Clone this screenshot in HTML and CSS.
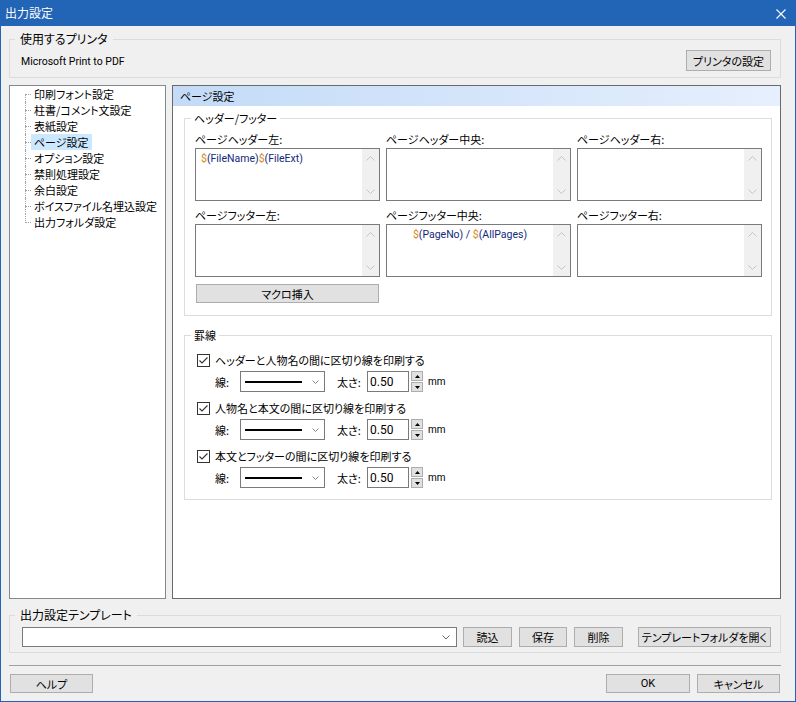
FILE: index.html
```html
<!DOCTYPE html>
<html lang="ja">
<head>
<meta charset="utf-8">
<title>出力設定</title>
<link rel="stylesheet" href="styles.css">
</head>
<body>
<div class="window">
  <div class="titlebar">
    <span class="title">出力設定</span>
    <svg class="close" width="10" height="10" viewBox="0 0 10 10"><path d="M0.5 0.5L9.5 9.5M9.5 0.5L0.5 9.5" stroke="#fff" stroke-width="1.1" fill="none"/></svg>
  </div>
  <div class="client">
    <fieldset class="group outer printer">
      <legend>使用するプリンタ</legend>
      <div class="printer-row">
        <span class="printer-name">Microsoft Print to PDF</span>
        <button class="btn btn-printer">プリンタの設定</button>
      </div>
    </fieldset>

    <div class="main">
      <ul class="tree">
        <li><span>印刷フォント設定</span></li>
        <li><span>柱書/コメント文設定</span></li>
        <li><span>表紙設定</span></li>
        <li class="selected"><span>ページ設定</span></li>
        <li><span>オプション設定</span></li>
        <li><span>禁則処理設定</span></li>
        <li><span>余白設定</span></li>
        <li><span>ボイスファイル名埋込設定</span></li>
        <li><span>出力フォルダ設定</span></li>
      </ul>

      <section class="panel">
        <div class="panel-head">ページ設定</div>

        <fieldset class="group hf">
          <legend>ヘッダー/フッター</legend>
          <div class="hf-grid">
            <div class="cell">
              <div class="lbl">ページヘッダー左:</div>
              <div class="memo">
                <div class="memo-text"><span class="d">$</span>(FileName)<span class="d">$</span>(FileExt)</div>
                <div class="vscroll">
                  <svg width="9" height="5" viewBox="0 0 9 5"><polyline points="0.5,4.5 4.5,0.5 8.5,4.5" fill="none" stroke="#c4c4c4"/></svg>
                  <svg width="9" height="5" viewBox="0 0 9 5"><polyline points="0.5,0.5 4.5,4.5 8.5,0.5" fill="none" stroke="#c4c4c4"/></svg>
                </div>
              </div>
            </div>
            <div class="cell">
              <div class="lbl">ページヘッダー中央:</div>
              <div class="memo">
                <div class="memo-text"></div>
                <div class="vscroll">
                  <svg width="9" height="5" viewBox="0 0 9 5"><polyline points="0.5,4.5 4.5,0.5 8.5,4.5" fill="none" stroke="#c4c4c4"/></svg>
                  <svg width="9" height="5" viewBox="0 0 9 5"><polyline points="0.5,0.5 4.5,4.5 8.5,0.5" fill="none" stroke="#c4c4c4"/></svg>
                </div>
              </div>
            </div>
            <div class="cell">
              <div class="lbl">ページヘッダー右:</div>
              <div class="memo">
                <div class="memo-text"></div>
                <div class="vscroll">
                  <svg width="9" height="5" viewBox="0 0 9 5"><polyline points="0.5,4.5 4.5,0.5 8.5,4.5" fill="none" stroke="#c4c4c4"/></svg>
                  <svg width="9" height="5" viewBox="0 0 9 5"><polyline points="0.5,0.5 4.5,4.5 8.5,0.5" fill="none" stroke="#c4c4c4"/></svg>
                </div>
              </div>
            </div>
            <div class="cell">
              <div class="lbl">ページフッター左:</div>
              <div class="memo">
                <div class="memo-text"></div>
                <div class="vscroll">
                  <svg width="9" height="5" viewBox="0 0 9 5"><polyline points="0.5,4.5 4.5,0.5 8.5,4.5" fill="none" stroke="#c4c4c4"/></svg>
                  <svg width="9" height="5" viewBox="0 0 9 5"><polyline points="0.5,0.5 4.5,4.5 8.5,0.5" fill="none" stroke="#c4c4c4"/></svg>
                </div>
              </div>
            </div>
            <div class="cell">
              <div class="lbl">ページフッター中央:</div>
              <div class="memo">
                <div class="memo-text center"><span class="d">$</span>(PageNo) / <span class="d">$</span>(AllPages)</div>
                <div class="vscroll">
                  <svg width="9" height="5" viewBox="0 0 9 5"><polyline points="0.5,4.5 4.5,0.5 8.5,4.5" fill="none" stroke="#c4c4c4"/></svg>
                  <svg width="9" height="5" viewBox="0 0 9 5"><polyline points="0.5,0.5 4.5,4.5 8.5,0.5" fill="none" stroke="#c4c4c4"/></svg>
                </div>
              </div>
            </div>
            <div class="cell">
              <div class="lbl">ページフッター右:</div>
              <div class="memo">
                <div class="memo-text"></div>
                <div class="vscroll">
                  <svg width="9" height="5" viewBox="0 0 9 5"><polyline points="0.5,4.5 4.5,0.5 8.5,4.5" fill="none" stroke="#c4c4c4"/></svg>
                  <svg width="9" height="5" viewBox="0 0 9 5"><polyline points="0.5,0.5 4.5,4.5 8.5,0.5" fill="none" stroke="#c4c4c4"/></svg>
                </div>
              </div>
            </div>
          </div>
          <button class="btn btn-macro">マクロ挿入</button>
        </fieldset>

        <fieldset class="group rules">
          <legend>罫線</legend>

          <div class="rule-item">
            <div class="check-row">
              <svg class="checkbox" width="13" height="13" viewBox="0 0 13 13"><rect x="0.5" y="0.5" width="12" height="12" fill="#fff" stroke="#333"/><polyline points="2.5,6.5 5,9 10.5,3.5" fill="none" stroke="#333" stroke-width="1.1"/></svg>
              <span>ヘッダーと人物名の間に区切り線を印刷する</span>
            </div>
            <div class="ctrl-row">
              <span class="ctrl-lbl">線:</span>
              <div class="combo-line"><span class="line-sample"></span><svg width="7" height="4" viewBox="0 0 7 4"><polyline points="0.5,0.5 3.5,3.5 6.5,0.5" fill="none" stroke="#8a8a8a"/></svg></div>
              <span class="ctrl-lbl2">太さ:</span>
              <div class="spin-input">0.50</div>
              <div class="spin-btns">
                <div class="spin-btn"><svg width="5" height="3" viewBox="0 0 5 3"><polygon points="0,3 2.5,0 5,3" fill="#000"/></svg></div>
                <div class="spin-btn"><svg width="5" height="3" viewBox="0 0 5 3"><polygon points="0,0 2.5,3 5,0" fill="#000"/></svg></div>
              </div>
              <span class="unit">mm</span>
            </div>
          </div>

          <div class="rule-item">
            <div class="check-row">
              <svg class="checkbox" width="13" height="13" viewBox="0 0 13 13"><rect x="0.5" y="0.5" width="12" height="12" fill="#fff" stroke="#333"/><polyline points="2.5,6.5 5,9 10.5,3.5" fill="none" stroke="#333" stroke-width="1.1"/></svg>
              <span>人物名と本文の間に区切り線を印刷する</span>
            </div>
            <div class="ctrl-row">
              <span class="ctrl-lbl">線:</span>
              <div class="combo-line"><span class="line-sample"></span><svg width="7" height="4" viewBox="0 0 7 4"><polyline points="0.5,0.5 3.5,3.5 6.5,0.5" fill="none" stroke="#8a8a8a"/></svg></div>
              <span class="ctrl-lbl2">太さ:</span>
              <div class="spin-input">0.50</div>
              <div class="spin-btns">
                <div class="spin-btn"><svg width="5" height="3" viewBox="0 0 5 3"><polygon points="0,3 2.5,0 5,3" fill="#000"/></svg></div>
                <div class="spin-btn"><svg width="5" height="3" viewBox="0 0 5 3"><polygon points="0,0 2.5,3 5,0" fill="#000"/></svg></div>
              </div>
              <span class="unit">mm</span>
            </div>
          </div>

          <div class="rule-item">
            <div class="check-row">
              <svg class="checkbox" width="13" height="13" viewBox="0 0 13 13"><rect x="0.5" y="0.5" width="12" height="12" fill="#fff" stroke="#333"/><polyline points="2.5,6.5 5,9 10.5,3.5" fill="none" stroke="#333" stroke-width="1.1"/></svg>
              <span>本文とフッターの間に区切り線を印刷する</span>
            </div>
            <div class="ctrl-row">
              <span class="ctrl-lbl">線:</span>
              <div class="combo-line"><span class="line-sample"></span><svg width="7" height="4" viewBox="0 0 7 4"><polyline points="0.5,0.5 3.5,3.5 6.5,0.5" fill="none" stroke="#8a8a8a"/></svg></div>
              <span class="ctrl-lbl2">太さ:</span>
              <div class="spin-input">0.50</div>
              <div class="spin-btns">
                <div class="spin-btn"><svg width="5" height="3" viewBox="0 0 5 3"><polygon points="0,3 2.5,0 5,3" fill="#000"/></svg></div>
                <div class="spin-btn"><svg width="5" height="3" viewBox="0 0 5 3"><polygon points="0,0 2.5,3 5,0" fill="#000"/></svg></div>
              </div>
              <span class="unit">mm</span>
            </div>
          </div>
        </fieldset>
      </section>
    </div>

    <fieldset class="group outer template">
      <legend>出力設定テンプレート</legend>
      <div class="tpl-row">
        <div class="tpl-combo"><svg width="8" height="5" viewBox="0 0 8 5"><polyline points="0.5,0.5 4,4 7.5,0.5" fill="none" stroke="#666"/></svg></div>
        <button class="btn btn-load">読込</button>
        <button class="btn btn-save">保存</button>
        <button class="btn btn-del">削除</button>
        <button class="btn btn-open">テンプレートフォルダを開く</button>
      </div>
    </fieldset>

    <div class="sep"></div>

    <div class="footer">
      <button class="btn btn-help">ヘルプ</button>
      <button class="btn btn-ok latin">OK</button>
      <button class="btn btn-cancel">キャンセル</button>
    </div>
  </div>
</div>
</body>
</html>
```

FILE: styles.css
```css
* { box-sizing: border-box; }
html, body { margin: 0; padding: 0; }
body {
  width: 796px;
  height: 702px;
  overflow: hidden;
  background: #f0f0f0;
  font-family: "Noto Sans CJK JP", sans-serif;
  font-size: 11px;
  line-height: 16px;
  color: #000;
  font-feature-settings: "palt";
}
.latin { font-family: Roboto, "Noto Sans CJK JP", sans-serif; }

.window {
  width: 796px;
  height: 702px;
  border: 1px solid #2264b5;
  border-top: 0;
  display: flex;
  flex-direction: column;
}

.titlebar {
  height: 26px;
  flex: none;
  margin: 0 -1px;
  background: #2264b5;
  color: #fff;
  display: flex;
  align-items: center;
  justify-content: space-between;
  padding: 0 10px 0 5px;
}
.title { font-size: 12px; }
.close { margin-top: 2px; }

.client {
  flex: 1;
  display: flex;
  flex-direction: column;
  padding: 0 14px 0 8px;
}

/* group boxes */
.group {
  margin: 0;
  border: 1px solid #dcdcdc;
  min-width: 0;
}
.group > legend {
  padding: 0 5px;
  line-height: 16px;
  white-space: nowrap;
}
.outer > legend { font-size: 12px; }

.btn {
  font: inherit;
  font-feature-settings: "palt";
  color: #000;
  background: #e1e1e1;
  border: 1px solid #adadad;
  padding: 0;
  margin: 0;
  line-height: 16px;
  white-space: nowrap;
  display: flex;
  align-items: center;
  justify-content: center;
}
.btn.latin { font-family: Roboto, sans-serif; }

/* printer */
.printer {
  margin-top: 5px;
  padding: 3px 9px 6px 11px;
}
.printer > legend { margin-left: -6px; }
.printer-row {
  height: 21px;
  display: flex;
  align-items: center;
  justify-content: space-between;
}
.printer-name {
  font-family: Roboto, sans-serif;
  font-size: 10.5px;
  padding-top: 2px;
}
.btn-printer { width: 85px; height: 21px; }

/* main area */
.main {
  margin-top: 7px;
  height: 514px;
  flex: none;
  display: flex;
  gap: 6px;
}

.tree {
  width: 157px;
  flex: none;
  margin: 0;
  padding: 0;
  list-style: none;
  background: #fff;
  border: 1px solid #828790;
}
.tree li {
  position: relative;
  height: 16px;
  line-height: 16px;
  padding-left: 21px;
  white-space: nowrap;
}
.tree li span {
  display: inline-block;
  padding: 0 3px 0 3px;
  height: 16px;
}
.tree li.selected span { background: #cce8ff; }
.tree li::before {
  content: "";
  position: absolute;
  left: 15px;
  top: 8px;
  width: 6px;
  border-top: 1px dotted #a0a0a0;
}
.tree li::after {
  content: "";
  position: absolute;
  left: 15px;
  top: 0;
  height: 16px;
  border-left: 1px dotted #a0a0a0;
}
.tree li:first-child::after { top: 8px; height: 8px; }
.tree li:last-child::after { height: 9px; }

.panel {
  flex: 1;
  background: #fff;
  border: 1px solid #6a6a6a;
}
.panel-head {
  height: 20px;
  line-height: 20px;
  padding-left: 7px;
  background: linear-gradient(to right, #c3dbf7, #e6effd);
}

/* header / footer group */
.hf {
  margin: 4px 8px 0 11px;
  padding: 5px 9px 12px 10px;
}
.hf > legend { margin-left: -4px; padding: 0 3px; }
.hf-grid {
  display: grid;
  grid-template-columns: repeat(3, 185px);
  column-gap: 6px;
  row-gap: 6px;
}
.lbl { height: 17px; line-height: 17px; }
.memo {
  height: 53px;
  border: 1px solid #7a7a7a;
  background: #fff;
  display: flex;
}
.memo-text {
  flex: 1;
  padding: 2px 5px 0 5px;
  font-family: Roboto, sans-serif;
  font-size: 10.5px;
  color: #14287a;
  white-space: nowrap;
}
.memo-text.center { text-align: center; }
.memo-text .d { color: #d08a10; }
.vscroll {
  width: 17px;
  flex: none;
  background: #f0f0f0;
  display: flex;
  flex-direction: column;
  align-items: center;
  justify-content: space-between;
  padding: 7px 0 6px;
}
.vscroll svg { display: block; }
.btn-macro {
  margin: 7px 0 0 1px;
  width: 183px;
  height: 19px;
}

/* rules group */
.rules {
  margin: 11px 8px 0 11px;
  padding: 9px 9px 11px 12px;
}
.rules > legend { margin-left: -6px; padding: 0 3px; }
.rule-item + .rule-item { margin-top: 8px; }
.check-row {
  height: 16px;
  display: flex;
  align-items: center;
  white-space: nowrap;
}
.checkbox { display: block; margin-right: 5px; flex: none; }
.ctrl-row {
  margin-top: 3px;
  height: 21px;
  display: flex;
  align-items: center;
  padding-left: 18px;
}
.ctrl-lbl { width: 25px; }
.combo-line {
  width: 85px;
  height: 21px;
  border: 1px solid #7a7a7a;
  background: #fff;
  display: flex;
  align-items: center;
  padding: 0 5px 0 4px;
}
.line-sample {
  width: 57px;
  height: 2px;
  background: #000;
}
.combo-line svg { margin-left: auto; display: block; }
.ctrl-lbl2 { margin-left: 12px; width: 30px; }
.spin-input {
  width: 42px;
  height: 21px;
  border: 1px solid #7a7a7a;
  background: #fff;
  padding: 1px 0 0 2px;
  line-height: 18px;
  font-family: Roboto, sans-serif;
  font-size: 12px;
}
.spin-btns {
  margin-left: 2px;
  width: 12px;
  height: 21px;
  display: flex;
  flex-direction: column;
  justify-content: space-between;
}
.spin-btn {
  height: 10px;
  background: #e1e1e1;
  border: 1px solid #adadad;
  display: flex;
  align-items: center;
  justify-content: center;
}
.spin-btn svg { display: block; }
.unit { margin-left: 5px; font-family: Roboto, sans-serif; font-size: 10px; }

/* template group */
.template {
  margin-top: 8px;
  padding: 4px 9px 5px 12px;
}
.template > legend { margin-left: -7px; }
.tpl-row {
  height: 20px;
  display: flex;
}
.tpl-combo {
  width: 435px;
  height: 20px;
  border: 1px solid #7a7a7a;
  background: #fff;
  display: flex;
  align-items: center;
  justify-content: flex-end;
  padding-right: 6px;
}
.tpl-combo svg { display: block; }
.tpl-row .btn { height: 20px; }
.btn-load { margin-left: 6px; width: 49px; }
.btn-save { margin-left: 7px; width: 48px; }
.btn-del { margin-left: 7px; width: 49px; }
.btn-open { margin-left: 15px; width: 133px; }

.sep {
  margin-top: 12px;
  height: 1px;
  background: #a0a0a0;
  flex: none;
}

.footer {
  margin-top: 8px;
  height: 19px;
  display: flex;
}
.footer .btn { height: 19px; }
.btn-help { margin-left: 1px; width: 83px; }
.btn-ok { margin-left: auto; width: 84px; }
.btn-cancel { margin-left: 7px; margin-right: 1px; width: 83px; }
```
